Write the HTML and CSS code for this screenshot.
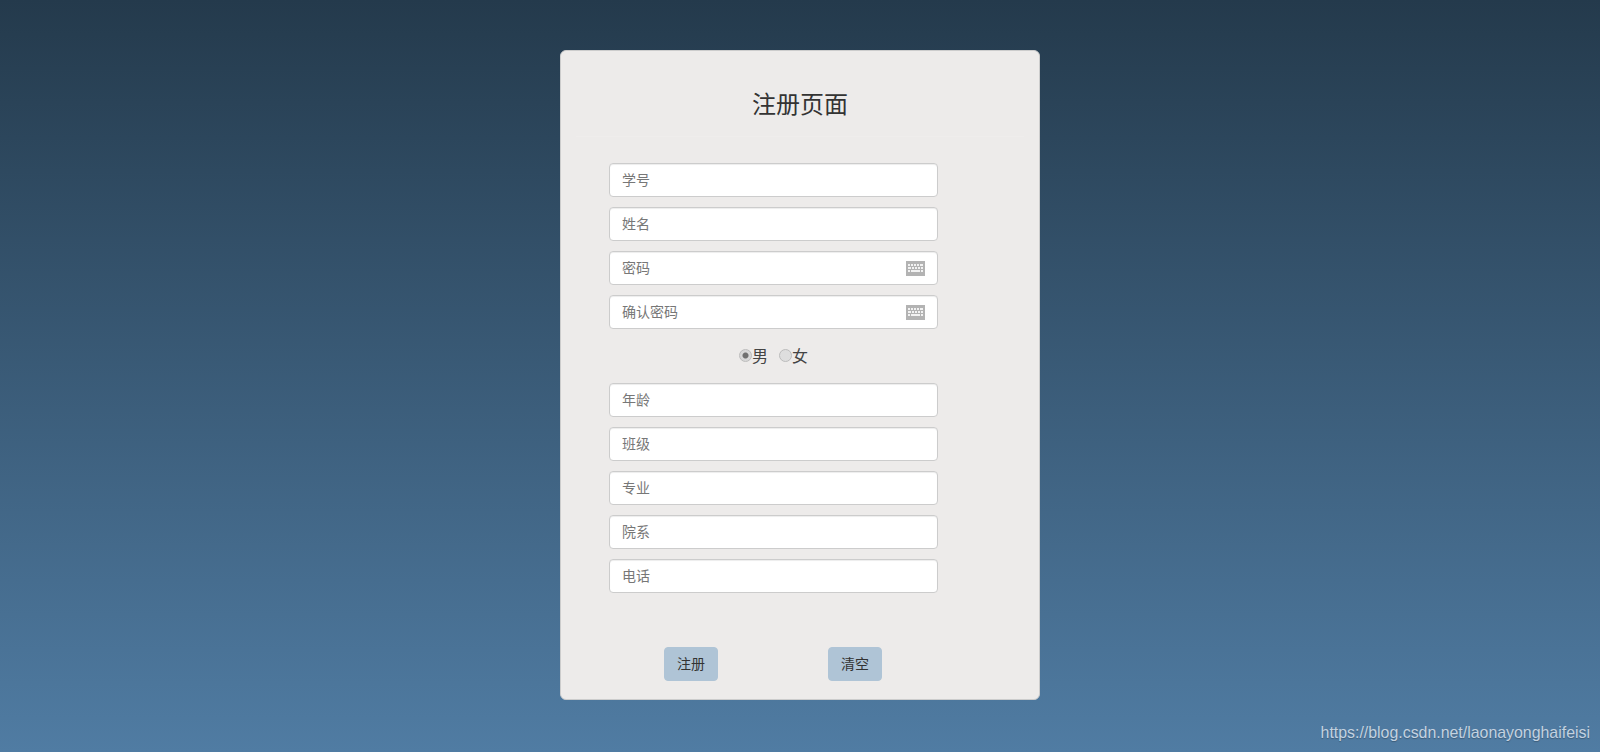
FILE: index.html
```html
<!DOCTYPE html>
<html lang="zh-CN">
<head>
<meta charset="utf-8">
<title>注册页面</title>
<link rel="stylesheet" href="styles.css">
</head>
<body>
<main class="card">
  <h1 class="title">注册页面</h1>
  <form class="form">
    <div class="fields">
      <div class="field"><input class="input" type="text" placeholder="学号"></div>
      <div class="field"><input class="input" type="text" placeholder="姓名"></div>
      <div class="field">
        <input class="input" type="password" placeholder="密码">
        <svg class="kbd" viewBox="0 0 19 15" aria-hidden="true"><rect width="19" height="15" fill="#b3b3b3"/><path d="M2 3h2v2H2zM5 3h2v2H5zM8 3h2v2H8zM11 3h2v2h-2zM14 3h3v2h-3zM2 6h3v2H2zM6 6h2v2H6zM9 6h2v2H9zM12 6h2v2h-2zM15 6h2v2h-2zM2 9h2v2H2zM5 9h9v2H5zM15 9h2v2h-2z" fill="#f2f2f2"/></svg>
      </div>
      <div class="field">
        <input class="input" type="password" placeholder="确认密码">
        <svg class="kbd" viewBox="0 0 19 15" aria-hidden="true"><rect width="19" height="15" fill="#b3b3b3"/><path d="M2 3h2v2H2zM5 3h2v2H5zM8 3h2v2H8zM11 3h2v2h-2zM14 3h3v2h-3zM2 6h3v2H2zM6 6h2v2H6zM9 6h2v2H9zM12 6h2v2h-2zM15 6h2v2h-2zM2 9h2v2H2zM5 9h9v2H5zM15 9h2v2h-2z" fill="#f2f2f2"/></svg>
      </div>
      <div class="gender">
        <label class="choice"><input class="radio" type="radio" name="sex" checked>男</label>
        <label class="choice"><input class="radio" type="radio" name="sex">女</label>
      </div>
      <div class="field"><input class="input" type="text" placeholder="年龄"></div>
      <div class="field"><input class="input" type="text" placeholder="班级"></div>
      <div class="field"><input class="input" type="text" placeholder="专业"></div>
      <div class="field"><input class="input" type="text" placeholder="院系"></div>
      <div class="field"><input class="input" type="text" placeholder="电话"></div>
    </div>
    <div class="actions">
      <button class="btn" type="submit">注册</button>
      <button class="btn" type="reset">清空</button>
    </div>
  </form>
</main>
<div class="watermark">https://blog.csdn.net/laonayonghaifeisi</div>
</body>
</html>
```
FILE: styles.css
```css
* { box-sizing: border-box; }
html, body { margin: 0; height: 752px; overflow: hidden; }
body {
  position: relative;
  padding-top: 50px;
  background: linear-gradient(to bottom, #243a4c 0%, #507ca3 100%);
  font-family: "Noto Sans CJK SC", "Liberation Sans", sans-serif;
  color: #333;
}
.card {
  width: 480px;
  height: 650px;
  margin: 0 auto;
  background: #edebea;
  border: 1px solid #ccc;
  border-radius: 6px;
  padding: 0 15px;
}
.title {
  margin: 0;
  height: 86px;
  padding-top: 34px;
  font-size: 24px;
  line-height: 36px;
  font-weight: 400;
  text-align: center;
  color: #333;
  border-bottom: 1px solid #efedec;
}
.form { padding: 26px 0 0 33px; }
.fields { width: 329px; }
.field { position: relative; height: 34px; margin-bottom: 10px; }
.input {
  display: block;
  width: 100%;
  height: 34px;
  padding: 5px 12px 7px;
  background: #fff;
  border: 1px solid #ccc;
  border-radius: 4px;
  box-shadow: inset 0 1px 1px rgba(0,0,0,.075);
  font: 14px/20px "Noto Sans CJK SC", sans-serif;
  color: #555;
  outline: none;
}
.input::placeholder { color: #777; opacity: 1; }
.kbd { position: absolute; right: 13px; top: 10px; width: 19px; height: 15px; }
.gender {
  display: flex;
  justify-content: center;
  gap: 11px;
  height: 44px;
  padding-top: 4px;
  font-size: 16px;
  line-height: 24px;
  color: #444;
}
.choice { display: flex; align-items: center; height: 24px; }
.radio {
  appearance: none;
  width: 13px;
  height: 13px;
  margin: 0;
  border: 1px solid #bcbcbc;
  border-radius: 50%;
  background: #dedede;
}
.radio:checked {
  background: radial-gradient(circle, #707070 0 2.5px, #d8d8d8 3.5px);
}
.actions {
  display: flex;
  gap: 110px;
  padding: 0 0 0 55px;
  margin-top: 54px;
}
.btn {
  width: 54px;
  height: 34px;
  padding: 0 0 2px;
  border: 1px solid #afc4d6;
  border-radius: 4px;
  background: #afc4d6;
  font: 14px/20px "Noto Sans CJK SC", sans-serif;
  color: #333;
}
.watermark {
  position: absolute;
  right: 10px;
  bottom: 9px;
  font: 15.9px/20px "Liberation Sans", sans-serif;
  color: #c3d2e0;
  text-shadow: 0 1px 1px rgba(0,0,0,.25);
}
```
